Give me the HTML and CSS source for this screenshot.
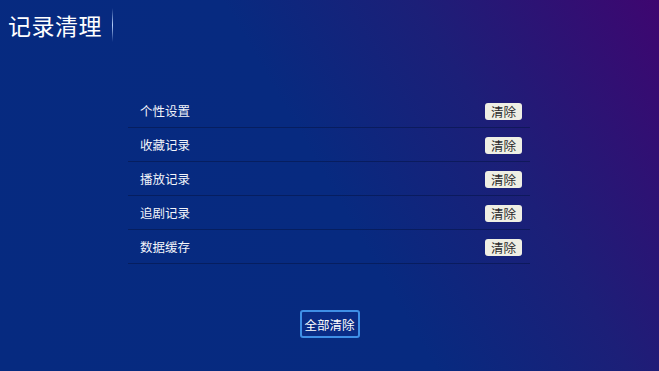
FILE: index.html
```html
<!DOCTYPE html>
<html lang="zh">
<head>
<meta charset="utf-8">
<link rel="stylesheet" href="styles.css">
</head>
<body>
<div class="page">
  <header class="header">
    <h1 class="title">记录清理</h1>
    <span class="divider"></span>
  </header>
  <ul class="list">
    <li class="row"><span class="label">个性设置</span><button class="clear">清除</button></li>
    <li class="row"><span class="label">收藏记录</span><button class="clear">清除</button></li>
    <li class="row"><span class="label">播放记录</span><button class="clear">清除</button></li>
    <li class="row"><span class="label">追剧记录</span><button class="clear">清除</button></li>
    <li class="row"><span class="label">数据缓存</span><button class="clear">清除</button></li>
  </ul>
  <div class="footer">
    <button class="clear-all">全部清除</button>
  </div>
</div>
</body>
</html>
```

FILE: styles.css
```css
html, body {
  margin: 0;
  padding: 0;
  width: 659px;
  height: 371px;
  overflow: hidden;
}
body {
  font-family: "Noto Sans CJK SC", "Noto Sans", sans-serif;
  background: linear-gradient(60deg, #062a80 0%, #072a80 50%, #1c1f78 72%, #3e0670 100%);
  color: #fff;
}
.page {
  display: flex;
  flex-direction: column;
  height: 371px;
}
.header {
  display: flex;
  align-items: center;
  height: 52px;
  padding-left: 8px;
}
.title {
  margin: 0;
  font-size: 23px;
  font-weight: 400;
  line-height: 1;
  letter-spacing: 0.5px;
  margin-top: -1px;
}
.divider {
  width: 1px;
  height: 34px;
  margin-left: 10px;
  margin-top: -2px;
  background: linear-gradient(to bottom, rgba(120,170,255,0), rgba(190,215,255,0.95) 50%, rgba(120,170,255,0));
}
.list {
  list-style: none;
  margin: 42px 0 0 128px;
  padding: 0;
  width: 402px;
}
.row {
  display: flex;
  align-items: center;
  justify-content: space-between;
  height: 33px;
  border-bottom: 1px solid rgba(5, 20, 70, 0.55);
  padding: 0 8px 0 12px;
}
.label {
  font-size: 12.5px;
  color: #f2f4fa;
}
.clear {
  font-family: "Noto Sans CJK SC", sans-serif;
  font-size: 12.5px;
  line-height: 17px;
  height: 17px;
  padding: 0;
  width: 37px;
  border: none;
  border-radius: 3px;
  background: #efefe4;
  color: #2a2a2a;
  margin-top: 1px;
}
.footer {
  display: flex;
  justify-content: center;
  margin-top: 46px;
}
.clear-all {
  font-family: "Noto Sans CJK SC", sans-serif;
  font-size: 12.5px;
  color: #fff;
  background: #0a2c86;
  border: 2px solid #3f8fe6;
  border-radius: 3px;
  width: 60px;
  height: 28px;
  padding: 0;
}
```
